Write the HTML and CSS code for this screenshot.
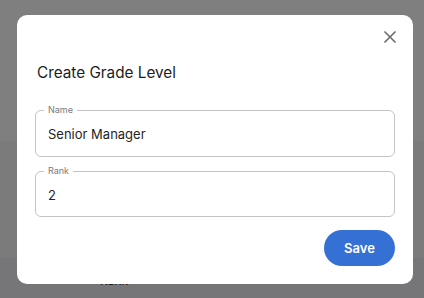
FILE: index.html
```html
<!DOCTYPE html>
<html lang="en">
<head>
  <meta charset="UTF-8">
  <meta name="viewport" content="width=device-width, initial-scale=1.0">
  <link rel="stylesheet" href="styles.css">
</head>
<body>
  <div class="page">
    <div class="page-top"></div>
    <div class="page-mid"></div>
    <div class="page-table">
      <span class="col-head">Rank</span>
    </div>
  </div>

  <!-- Modal -->
  <div class="overlay">
    <div class="modal">
      <div class="modal-head">
        <button class="close-btn" aria-label="Close">
          <svg width="14" height="14" viewBox="0 0 14 14">
            <path d="M1.5 1.5 L12.5 12.5 M12.5 1.5 L1.5 12.5" stroke="#6b6b6b" stroke-width="1.6" fill="none"/>
          </svg>
        </button>
      </div>
      <h2 class="modal-title">Create Grade Level</h2>
      <div class="field field-name">
        <span class="field-label">Name</span>
        <span class="field-value">Senior Manager</span>
      </div>
      <div class="field field-rank">
        <span class="field-label">Rank</span>
        <span class="field-value">2</span>
      </div>
      <div class="modal-actions">
        <button class="save-btn">Save</button>
      </div>
    </div>
  </div>
</body>
</html>
```

FILE: styles.css
```css
body {
  margin: 0;
  overflow: hidden;
  font-family: Inter, "Noto Sans", sans-serif;
}

.page {
  height: 100vh;
  display: flex;
  flex-direction: column;
  background: #ffffff;
}

.page-top {
  height: 141px;
  background: #ffffff;
}

.page-mid {
  height: 117px;
  background: #f6f6f6;
}

.page-table {
  flex: 1;
  background: #ececf3;
  padding: 11px 0 0 100px;
}

.col-head {
  font-size: 12px;
  color: #1b1b1b;
}

/* Modal */
.overlay {
  position: fixed;
  top: 0;
  left: 0;
  width: 100%;
  height: 100%;
  background: rgba(0, 0, 0, 0.5);
}

.modal {
  position: absolute;
  top: 15px;
  left: 17px;
  width: 396px;
  height: 269px;
  box-sizing: border-box;
  background: white;
  border-radius: 10px;
  padding: 0 18px;
  display: flex;
  flex-direction: column;
}

.modal-head {
  display: flex;
  justify-content: flex-end;
  padding-top: 15px;
  height: 29px;
  box-sizing: border-box;
}

.close-btn {
  background: none;
  border: none;
  padding: 0;
  margin-right: -2px;
  width: 14px;
  height: 14px;
  cursor: pointer;
}

.modal-title {
  margin: 19px 0 0 2px;
  font-size: 15.3px;
  font-weight: 400;
  color: #1c1c1c;
  line-height: 20px;
}

.field {
  position: relative;
  margin-top: 27px;
  padding: 0 12px;
  height: 47px;
  box-sizing: border-box;
  border: 1px solid #c4c4c4;
  border-radius: 6px;
  display: flex;
  align-items: center;
}

.field-rank {
  margin-top: 14px;
  height: 46px;
}

.field-label {
  position: absolute;
  top: -6px;
  left: 8px;
  padding: 0 4px;
  background: white;
  font-size: 9px;
  line-height: 10px;
  color: #7a7a7a;
}

.field-value {
  font-size: 13px;
  color: #1f1f1f;
  margin-top: 1px;
}

.modal-actions {
  display: flex;
  justify-content: flex-end;
  margin-top: 13px;
}

.save-btn {
  width: 71px;
  height: 36px;
  border: none;
  border-radius: 18px;
  background: #3570d4;
  color: white;
  font-family: inherit;
  font-size: 13px;
  font-weight: 600;
  cursor: pointer;
}
```
